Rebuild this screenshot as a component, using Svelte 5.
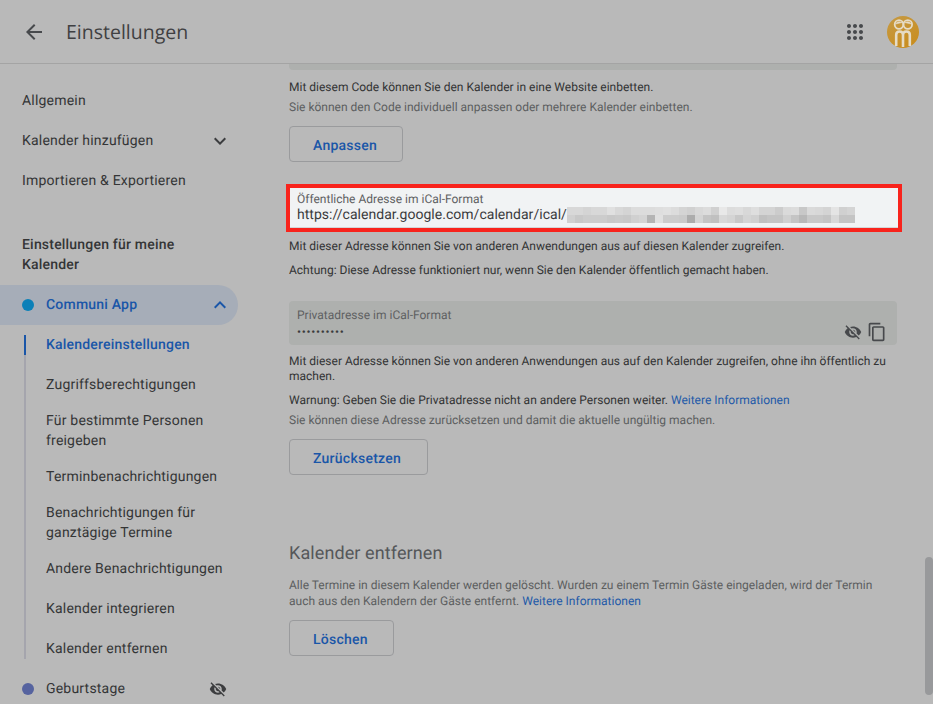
<script>
    const top = ['d8','d8','d4','d8','d8','e0','d8','d4','dc','dc','dc','de','e0','dc','d4','d0','d8','dc','d0','e8','dc','de','d8','de','d4','d4','cc','da','dc','c8','da','d8','d4','e4','d0','d4'];
    const bottom = ['d0','c8','cc','cc','cc','c8','ca','c8','d0','d4','b4','e0','cc','cc','ca','ac','d4','c4','c0','d8','d4','c8','d4','d0','c0','c4','c4','d0','c4','b8','c8','c8','c4','d8','c4','c4'];
    const cells = [...top, ...bottom];
</script>

<div class="page">
    <header>
        <svg class="back" width="24" height="24" viewBox="0 0 24 24"><path d="M20 11H7.830l5.590-5.590L12 4l-8 8 8 8 1.410-1.410L7.830 13H20z"/></svg>
        <h1>Einstellungen</h1>
        <svg class="apps" width="24" height="24" viewBox="0 0 24 24"><path d="M6 8c1.100 0 2-.9 2-2s-.9-2-2-2-2 .9-2 2 .9 2 2 2zm6 12c1.100 0 2-.9 2-2s-.9-2-2-2-2 .9-2 2 .9 2 2 2zm-6 0c1.100 0 2-.9 2-2s-.9-2-2-2-2 .9-2 2 .9 2 2 2zm0-6c1.100 0 2-.9 2-2s-.9-2-2-2-2 .9-2 2 .9 2 2 2zm6 0c1.100 0 2-.9 2-2s-.9-2-2-2-2 .9-2 2 .9 2 2 2zm4-8c0 1.100.9 2 2 2s2-.9 2-2-.9-2-2-2-2 .9-2 2zm-4 2c1.100 0 2-.9 2-2s-.9-2-2-2-2 .9-2 2 .9 2 2 2zm6 6c1.100 0 2-.9 2-2s-.9-2-2-2-2 .9-2 2 .9 2 2 2zm0 6c1.100 0 2-.9 2-2s-.9-2-2-2-2 .9-2 2 .9 2 2 2z"/></svg>
        <svg class="avatar" width="32" height="32" viewBox="0 0 32 32">
            <defs>
                <linearGradient id="avatarFill" x1="0" y1="0" x2="0.6" y2="1">
                    <stop offset="0" stop-color="#c59a45"/>
                    <stop offset="1" stop-color="#c98e20"/>
                </linearGradient>
            </defs>
            <circle cx="16" cy="16" r="16" fill="url(#avatarFill)"/>
            <g fill="none" stroke="#e6dcc6">
                <circle cx="12" cy="8.500" r="4.300" stroke-width="1.800"/>
                <circle cx="20.800" cy="8.500" r="4.300" stroke-width="1.800"/>
                <path d="M8.500 8q2-3.500 6.500-1.500zM24.300 8q-2-3.500-6.500-1.500z" fill="#e6dcc6" stroke-width="0.600"/>
                <path d="M9.200 30V18.700q0-3.200 3.400-3.200t3.400 3.200V31M16 18.700q0-3.200 3.400-3.200t3.400 3.200V30" stroke-width="2.600"/>
            </g>
        </svg>
    </header>

    <div class="body">
        <nav>
            <a class="item" href="#a">Allgemein</a>
            <a class="item spread" href="#a">Kalender hinzufügen
                <svg width="24" height="24" viewBox="0 0 24 24"><path d="M7.410 8.590 12 13.170l4.590-4.580L18 10l-6 6-6-6z"/></svg>
            </a>
            <a class="item" href="#a">Importieren &amp; Exportieren</a>

            <h2>Einstellungen für meine Kalender</h2>

            <a class="item cal open" href="#a">
                <span class="dot blue"></span>
                <span class="grow">Communi App</span>
                <svg width="24" height="24" viewBox="0 0 24 24"><path d="M12 8l-6 6 1.410 1.410L12 10.830l4.590 4.580L18 14z"/></svg>
            </a>
            <div class="subs">
                <a class="sub current" href="#a">Kalendereinstellungen</a>
                <a class="sub" href="#a">Zugriffsberechtigungen</a>
                <a class="sub" href="#a">Für bestimmte Personen freigeben</a>
                <a class="sub" href="#a">Terminbenachrichtigungen</a>
                <a class="sub" href="#a">Benachrichtigungen für ganztägige Termine</a>
                <a class="sub" href="#a">Andere Benachrichtigungen</a>
                <a class="sub" href="#a">Kalender integrieren</a>
                <a class="sub" href="#a">Kalender entfernen</a>
            </div>
            <a class="item cal" href="#a">
                <span class="dot indigo"></span>
                <span class="grow">Geburtstage</span>
                <svg class="eye" width="18" height="18" viewBox="0 0 24 24"><path d="M12 7c2.760 0 5 2.240 5 5 0 .65-.13 1.260-.36 1.830l2.920 2.920c1.510-1.260 2.700-2.890 3.430-4.750-1.730-4.390-6-7.500-11-7.500-1.400 0-2.740.25-3.980.7l2.160 2.160C10.740 7.130 11.350 7 12 7zM2 4.270l2.280 2.280.46.46C3.080 8.300 1.780 10.020 1 12c1.730 4.390 6 7.500 11 7.500 1.550 0 3.030-.3 4.380-.84l.42.42L19.730 22 21 20.730 3.270 3 2 4.270zM7.530 9.800l1.550 1.550c-.05.21-.08.43-.08.65 0 1.660 1.340 3 3 3 .22 0 .44-.03.65-.08l1.550 1.550c-.67.33-1.410.53-2.200.53-2.760 0-5-2.240-5-5 0-.79.2-1.530.53-2.200zm4.310-.78l3.150 3.150.02-.16c0-1.660-1.340-3-3-3l-.17.01z"/></svg>
            </a>
        </nav>

        <main>
            <div class="sliver"></div>
            <p class="line first">Mit diesem Code können Sie den Kalender in eine Website einbetten.</p>
            <p class="line muted">Sie können den Code individuell anpassen oder mehrere Kalender einbetten.</p>
            <button class="anpassen">Anpassen</button>

            <div class="redbox">
                <div class="field light">
                    <label for="ical">Öffentliche Adresse im iCal-Format</label>
                    <div class="value" id="ical">https://calendar.google.com/calendar/ical/<span class="blur">{#each cells as c}<i style="background:#{c}{c}{c}"></i>{/each}</span></div>
                </div>
            </div>

            <p class="line after-red">Mit dieser Adresse können Sie von anderen Anwendungen aus auf diesen Kalender zugreifen.</p>
            <p class="line warn">Achtung: Diese Adresse funktioniert nur, wenn Sie den Kalender öffentlich gemacht haben.</p>

            <div class="field dark">
                <label for="priv">Privatadresse im iCal-Format</label>
                <div class="value dots" id="priv">••••••••••</div>
                <div class="actions">
                    <svg width="18" height="18" viewBox="0 0 24 24"><path d="M12 7c2.760 0 5 2.240 5 5 0 .65-.13 1.260-.36 1.830l2.920 2.920c1.510-1.260 2.700-2.890 3.430-4.750-1.730-4.390-6-7.500-11-7.500-1.400 0-2.740.25-3.980.7l2.160 2.160C10.740 7.130 11.350 7 12 7zM2 4.270l2.280 2.280.46.46C3.080 8.300 1.780 10.020 1 12c1.730 4.390 6 7.500 11 7.500 1.550 0 3.030-.3 4.380-.84l.42.42L19.730 22 21 20.730 3.270 3 2 4.270zM7.530 9.800l1.550 1.550c-.05.21-.08.43-.08.65 0 1.660 1.340 3 3 3 .22 0 .44-.03.65-.08l1.550 1.550c-.67.33-1.410.53-2.200.53-2.760 0-5-2.240-5-5 0-.79.2-1.530.53-2.200zm4.310-.78l3.150 3.150.02-.16c0-1.660-1.340-3-3-3l-.17.01z"/></svg>
                    <svg width="20" height="20" viewBox="0 0 24 24"><path d="M16 1H4c-1.100 0-2 .9-2 2v14h2V3h12V1zm3 4H8c-1.100 0-2 .9-2 2v14c0 1.100.9 2 2 2h11c1.100 0 2-.9 2-2V7c0-1.100-.9-2-2-2zm0 16H8V7h11v14z"/></svg>
                </div>
            </div>

            <p class="para">Mit dieser Adresse können Sie von anderen Anwendungen aus auf den Kalender zugreifen, ohne ihn öffentlich zu machen.</p>
            <p class="line warnung">Warnung: Geben Sie die Privatadresse nicht an andere Personen weiter. <a href="#a">Weitere Informationen</a></p>
            <p class="line muted">Sie können diese Adresse zurücksetzen und damit die aktuelle ungültig machen.</p>
            <button class="reset">Zurücksetzen</button>

            <h3>Kalender entfernen</h3>
            <p class="para muted">Alle Termine in diesem Kalender werden gelöscht. Wurden zu einem Termin Gäste eingeladen, wird der Termin auch aus den Kalendern der Gäste entfernt. <a href="#a">Weitere Informationen</a></p>
            <button class="del">Löschen</button>
        </main>
        <div class="scrollbar"></div>
    </div>
</div>

<style>
    :global(body) {
        margin: 0;
        background: #b9b9b9;
        font-family: Roboto, "Liberation Sans", sans-serif;
        text-rendering: geometricPrecision;
        overflow: hidden;
    }
    .page {
        width: 933px;
        height: 704px;
        overflow: hidden;
        color: #323334;
    }
    header {
        box-sizing: border-box;
        height: 64px;
        border-bottom: 1px solid #a4a4a4;
        display: flex;
        align-items: center;
        padding-left: 22px;
        padding-right: 14px;
    }
    header svg {
        fill: #47494c;
    }
    h1 {
        margin: 0 0 0 20px;
        flex: 1;
        font-family: "Open Sans", sans-serif;
        font-size: 19.500px;
        font-weight: 400;
        color: #3f4042;
    }
    .avatar {
        margin-left: 20px;
    }
    .body {
        display: flex;
        height: 640px;
    }
    nav {
        width: 238px;
        flex: none;
        padding-top: 17px;
        margin-right: 51px;
        font-size: 14px;
        letter-spacing: 0.2px;
    }
    a {
        text-decoration: none;
    }
    .item {
        display: flex;
        align-items: center;
        height: 40px;
        padding-left: 22px;
        color: #343536;
    }
    .spread {
        justify-content: space-between;
        padding-right: 6px;
    }
    .item svg {
        fill: #3c3d3f;
    }
    h2 {
        margin: 34px 40px 10px 22px;
        font-size: 14px;
        font-weight: 500;
        line-height: 20px;
        color: #343536;
    }
    .cal {
        padding-right: 6px;
    }
    .open {
        background: #a6adb8;
        border-radius: 0 20px 20px 0;
        color: #1a56a8;
        font-weight: 500;
    }
    .open svg {
        fill: #1a56a8;
    }
    .grow {
        flex: 1;
    }
    .dot {
        width: 12px;
        height: 12px;
        border-radius: 50%;
        margin-right: 12px;
    }
    .blue {
        background: #0b80b8;
    }
    .indigo {
        background: #56639f;
    }
    .subs {
        position: relative;
    }
    .subs::before {
        content: "";
        position: absolute;
        left: 24px;
        top: 10px;
        bottom: 10px;
        width: 2px;
        background: #a5a5ad;
    }
    .sub {
        position: relative;
        display: flex;
        align-items: center;
        min-height: 40px;
        padding: 6px 10px 6px 46px;
        box-sizing: border-box;
        line-height: 20px;
        color: #343536;
    }
    .current {
        color: #1a56a8;
        font-weight: 500;
    }
    .current::before {
        content: "";
        position: absolute;
        left: 24px;
        top: 10px;
        bottom: 10px;
        width: 2px;
        background: #1a56a8;
    }
    .eye {
        margin-right: 5px;
    }
    main {
        width: 608px;
        flex: none;
        font-size: 12px;
        line-height: 16px;
        color: #323334;
    }
    .sliver {
        height: 6px;
        background: #aeb0ae;
        border-radius: 0 0 4px 4px;
    }
    p {
        margin: 0;
    }
    .line.first {
        margin-top: 9px;
    }
    .line + .line {
        margin-top: 4px;
    }
    .muted {
        color: #5c5e60;
    }
    main a {
        color: #1f5aa8;
    }
    button {
        display: block;
        height: 36px;
        background: transparent;
        border: 1px solid #9a9b9d;
        border-radius: 4px;
        color: #1a56a8;
        font-family: Roboto, sans-serif;
        font-size: 14px;
        font-weight: 500;
        letter-spacing: 0.25px;
        padding: 4px 25px 0 23px;
        text-rendering: geometricPrecision;
    }
    .anpassen {
        margin-top: 11px;
    }
    .redbox {
        margin: 22px -5px 0 -3px;
        border: 4px solid #f8231c;
        box-sizing: border-box;
        height: 48px;
    }
    .field {
        position: relative;
        box-sizing: border-box;
        border-radius: 4px;
        padding: 6px 8px 0;
    }
    .light {
        background: #f1f3f4;
        height: 40px;
        border-radius: 0;
        padding: 3px 8px 0 7px;
        border: 1px solid #d4d5d6;
        border-width: 0 0 1px;
    }
    .dark {
        background: #aeb0ae;
        height: 44px;
        margin-top: 23px;
    }
    label {
        display: block;
        font-size: 12px;
        line-height: 16px;
        color: #5e6062;
    }
    .value {
        display: flex;
        align-items: center;
        height: 16px;
        font-size: 14px;
        letter-spacing: 0.03px;
        color: #3a3b3d;
    }
    .dots {
        font-size: 12px;
        letter-spacing: 0.700px;
        padding-top: 1px;
    }
    .blur {
        display: grid;
        grid-template-columns: repeat(36, 8px);
        grid-auto-rows: 8px;
    }
    .blur i {
        display: block;
    }
    .actions {
        position: absolute;
        right: 10px;
        bottom: 3px;
        display: flex;
        align-items: center;
        gap: 5px;
    }
    .actions svg {
        fill: #47494c;
    }
    .line.after-red {
        margin-top: 6px;
    }
    .line.warn {
        margin-top: 8px;
    }
    .para {
        margin-top: 9px;
        line-height: 15px;
    }
    .line.warnung {
        margin-top: 8px;
    }
    .reset {
        margin-top: 11px;
        padding-right: 26px;
    }
    h3 {
        margin: 67px 0 0;
        font-family: Roboto, sans-serif;
        font-size: 18px;
        font-weight: 400;
        line-height: 24px;
        letter-spacing: 0.1px;
        color: #55575a;
    }
    h3 + .para {
        margin-top: 11px;
        line-height: 16px;
    }
    .del {
        margin-top: 11px;
    }
    .scrollbar {
        position: absolute;
        left: 925px;
        top: 557px;
        width: 8px;
        height: 138px;
        border-radius: 4px;
        background: #98999b;
    }
</style>
